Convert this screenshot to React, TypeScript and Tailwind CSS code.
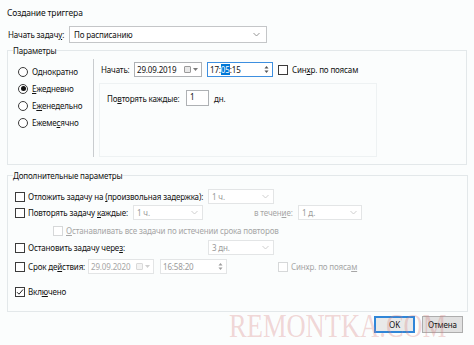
import React from 'react';

const Chevron = ({ faded }: { faded?: boolean }) => (
  <svg width="7" height="5" viewBox="0 0 7 5" className="shrink-0">
    <path d="M0.5 1 L3.5 4 L6.5 1" fill="none" stroke={faded ? '#c9c9c9' : '#8a8a8a'} strokeWidth="0.9" />
  </svg>
);

const Select = ({ value, w, faded }: { value: string; w: string; faded?: boolean }) => (
  <div
    className={`${w} h-[15px] shrink-0 flex items-center justify-between pl-[3px] pr-[4px] border ${
      faded ? 'border-[#e3e5e6] text-[#9a9a9a]' : 'border-[#c4c6c8] text-[#111]'
    } bg-white`}
  >
    <span>{value}</span>
    <Chevron faded={faded} />
  </div>
);

const CalIcon = ({ faded }: { faded?: boolean }) => (
  <div className="flex items-center gap-[2px] shrink-0">
    <div className={`w-[7px] h-[7px] rounded-[1px] border ${faded ? 'border-[#d9d9d9] bg-[#f4f4f4]' : 'border-[#9a9a9a] bg-[#e8e8e8]'}`} />
    <svg width="5" height="3" viewBox="0 0 5 3">
      <path d="M0 0 L5 0 L2.5 3 Z" fill={faded ? '#cfcfcf' : '#7a7a7a'} />
    </svg>
  </div>
);

const Spin = ({ faded }: { faded?: boolean }) => (
  <svg width="5" height="9" viewBox="0 0 5 9" className="shrink-0">
    <path d="M0.5 3.5 L2.5 1 L4.5 3.5 Z" fill={faded ? '#9c9c9c' : '#555'} />
    <path d="M0.5 5.5 L2.5 8 L4.5 5.5 Z" fill={faded ? '#9c9c9c' : '#555'} />
  </svg>
);

const Checkbox = ({ checked, faded }: { checked?: boolean; faded?: boolean }) => (
  <div
    className={`w-[10px] h-[10px] shrink-0 border flex items-center justify-center bg-white ${
      faded ? 'border-[#d6d8d9]' : 'border-[#3b3b3b]'
    }`}
  >
    {checked && (
      <svg width="8" height="8" viewBox="0 0 8 8">
        <path d="M1 4.2 L3 6.2 L7 1.5" fill="none" stroke="#222" strokeWidth="1" />
      </svg>
    )}
  </div>
);

const Radio = ({ checked }: { checked?: boolean }) => (
  <div className="w-[10px] h-[10px] shrink-0 rounded-full border border-[#3b3b3b] flex items-center justify-center bg-white">
    {checked && <div className="w-[5px] h-[5px] rounded-full bg-[#111]" />}
  </div>
);

const radios = [
  { label: <>Однократно</>, checked: false },
  { label: <><u>Е</u>жедневно</>, checked: true },
  { label: <>Е<u>ж</u>енедельно</>, checked: false },
  { label: <>Ежеме<u>с</u>ячно</>, checked: false },
];

export default function App() {
  return (
    <div
      className="relative w-[474px] h-[345px] overflow-hidden whitespace-nowrap bg-[#fbfdfd] text-[#111] text-[8px] leading-[11px] tracking-[-0.15px]"
      style={{ fontFamily: '"Segoe UI", "Noto Sans", sans-serif' }}
    >
      <div className="pt-[7px] pl-[7px] text-[8.5px]">Создание триггера</div>

      <div className="mt-[8px] flex items-center pl-[8px] h-[17px]">
        <span className="w-[61px] shrink-0">Начать задач<u>у</u>:</span>
        <div className="w-[198px] h-[17px] flex items-center justify-between pl-[4px] pr-[6px] border border-[#c4c6c8] bg-white">
          <span>По расписанию</span>
          <Chevron />
        </div>
      </div>

      {/* Параметры */}
      <fieldset className="mt-[2px] ml-[7px] w-[460px] border border-[#e3e8ea]">
        <legend className="ml-[5px] px-0">Параметры</legend>
        <div className="flex h-[108px]">
          <div className="w-[85px] shrink-0 pt-[7px] pl-[10px] flex flex-col">
            {radios.map((r, i) => (
              <div key={i} className="h-[17px] flex items-center gap-[4px]">
                <Radio checked={r.checked} />
                <span>{r.label}</span>
              </div>
            ))}
          </div>

          <div className="mt-[3px] h-[98px] border-l border-[#c9cccf] pl-[7px] pt-[3px]">
            <div className="flex items-center h-[15px]">
              <span className="w-[33px] shrink-0">Начать:</span>
              <div className="w-[68px] h-[15px] shrink-0 flex items-center justify-between pl-[2px] pr-[3px] border border-[#aeb1b4] bg-white">
                <span>29.09.2019</span>
                <CalIcon />
              </div>
              <div className="ml-[5px] w-[66px] h-[15px] shrink-0 flex items-center justify-between pl-[2px] pr-[3px] border border-[#3d8fe0] bg-white">
                <span>
                  17:<span className="bg-[#0078d7] text-white">05</span>:15
                </span>
                <Spin />
              </div>
              <div className="ml-[5px] flex items-center gap-[4px]">
                <Checkbox />
                <span>Син<u>х</u>р. по поясам</span>
              </div>
            </div>

            <div className="mt-[6px] -ml-[2px] w-[278px] h-[74px] border border-[#eef2f3] pl-[7px] pt-[6px]">
              <div className="flex items-center h-[16px]">
                <span className="w-[79px] shrink-0">По<u>в</u>торять каждые:</span>
                <div className="w-[23px] h-[16px] shrink-0 border border-[#aeb1b4] bg-white pl-[3px] flex items-start">
                  <span>1</span>
                </div>
                <span className="ml-[5px]">дн.</span>
              </div>
            </div>
          </div>
        </div>
      </fieldset>

      {/* Дополнительные параметры */}
      <fieldset className="mt-[5px] ml-[7px] w-[461px] border border-[#e3e8ea]">
        <legend className="ml-[5px] px-0">Дополнительные параметры</legend>
        <div className="pl-[7px] pt-[8px] h-[130px] flex flex-col">
          <div className="h-[15px] flex items-center">
            <Checkbox />
            <span className="ml-[3px] w-[180px] shrink-0">Отложить задачу на <u>(</u>произвольная задержка):</span>
            <Select value="1 ч." w="w-[66px]" faded />
          </div>

          <div className="mt-[1px] h-[15px] flex items-center">
            <Checkbox />
            <span className="ml-[3px] w-[105px] shrink-0">Повторять задачу <u>к</u>аждые:</span>
            <Select value="1 ч." w="w-[70px]" faded />
            <span className="ml-[51px] w-[44px] shrink-0 text-[#a6a6a6]">в течен<u>и</u>е:</span>
            <Select value="1 д." w="w-[64px]" faded />
          </div>

          <div className="mt-[3px] h-[15px] flex items-center pl-[38px] text-[#a6a6a6]">
            <Checkbox faded />
            <span className="ml-[3px]"><u>О</u>станавливать все задачи по истечении срока повторов</span>
          </div>

          <div className="mt-[2px] h-[15px] flex items-center">
            <Checkbox />
            <span className="ml-[3px] w-[180px] shrink-0">Остановить задачу чере<u>з</u>:</span>
            <Select value="3 дн." w="w-[66px]" faded />
          </div>

          <div className="mt-[4px] h-[15px] flex items-center">
            <Checkbox />
            <span className="ml-[3px] w-[60px] shrink-0">Срок де<u>й</u>ствия:</span>
            <div className="w-[66px] h-[15px] shrink-0 flex items-center justify-between pl-[2px] pr-[3px] border border-[#e3e5e6] bg-white text-[#a6a6a6]">
              <span>29.09.2020</span>
              <CalIcon faded />
            </div>
            <div className="ml-[6px] w-[67px] h-[15px] shrink-0 flex items-center justify-between pl-[2px] pr-[3px] border border-[#e3e5e6] bg-white text-[#9a9a9a]">
              <span>16:58:20</span>
              <Spin faded />
            </div>
            <div className="ml-[51px] flex items-center gap-[3px] text-[#a6a6a6]">
              <Checkbox faded />
              <span>Синхр. по пояса<u>м</u></span>
            </div>
          </div>

          <div className="mt-[10px] h-[15px] flex items-center">
            <Checkbox checked />
            <span className="ml-[3px]">Вкл<u>ю</u>чено</span>
          </div>
        </div>
      </fieldset>

      <div className="mt-[4px] flex justify-end gap-[7px] pr-[11px]">
        <button className="w-[41px] h-[17px] border-2 border-[#2f86d8] bg-[#e9e9e9] flex items-center justify-center">
          OK
        </button>
        <button className="w-[41px] h-[17px] border border-[#adadad] bg-[#e1e1e1] flex items-center justify-center">
          Отмена
        </button>
      </div>

      <div
        className="pointer-events-none absolute left-[229px] top-[309px] text-[34px] leading-[34px] tracking-normal text-[rgba(214,120,120,0.3)] origin-left scale-x-[0.78]"
        style={{ fontFamily: '"Liberation Serif", serif' }}
      >
        REMONTKA.COM
      </div>
    </div>
  );
}
